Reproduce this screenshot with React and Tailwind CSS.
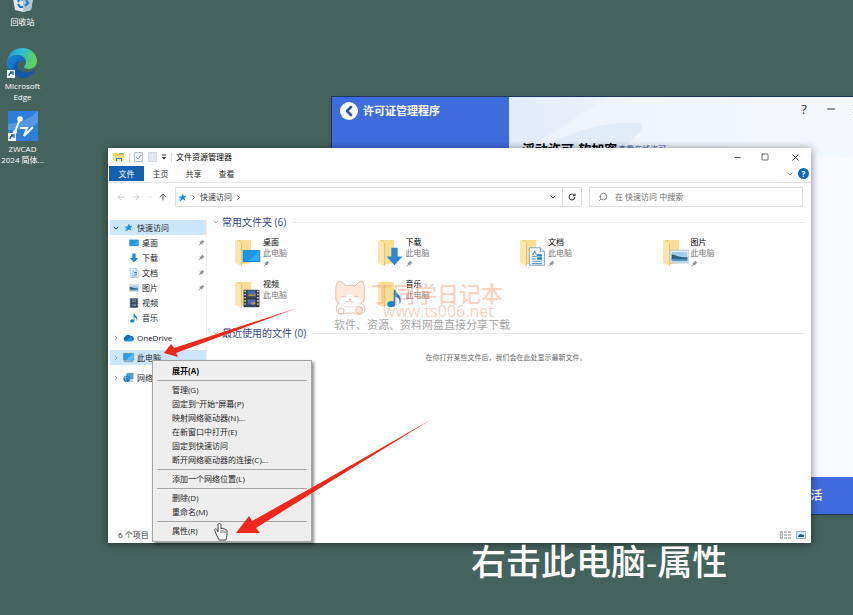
import { ArrowLeft, ArrowRight, ArrowUp, ChevronDown, ChevronLeft, ChevronRight, Minus, RotateCw, Search, Square, X } from "lucide-react"

function StarIcon({ className = "" }) {
  return (
    <svg viewBox="0 0 20 20" className={className} aria-hidden="true">
      <path d="M11 1l2 5.500 6-.500-4.500 5 2 6-5.500-3-6 4.500-1 0 2.500-6.500L1 8.500l6.500-1z" fill="#1e90e6" />
      <path d="M1 17l5-3M2 13h3" stroke="#5db4f0" strokeWidth="1.500" />
    </svg>
  )
}

function PinIcon({ className = "" }) {
  return (
    <svg viewBox="0 0 14 14" className={className} aria-hidden="true">
      <path d="M8 1l5 5-2 .5-2 2-.5 3L6 9.500 1.500 13 1 12.500 4.500 8 2.500 5.500l3-.5 2-2z" fill="#8d949a" />
    </svg>
  )
}

function ScreenShape() {
  return (
    <>
      <path d="M1 4h22v15H1z" fill="#0f79cf" />
      <path d="M2 5h20v13H2z" fill="#1b97ea" />
      <path d="M22 5v13H8z" fill="#35a9f3" />
    </>
  )
}

function ArrowShape() {
  return <path d="M8 1h8v11h6L12 23 2 12h6z" fill="#2f86d6" />
}

function DocShape() {
  return (
    <>
      <path d="M3 1h14l5 5v17H3z" fill="#f7fbfe" stroke="#7fa3bf" strokeWidth="1.200" />
      <path d="M17 1v5h5" fill="none" stroke="#7fa3bf" strokeWidth="1.200" />
      <path d="M7 10l3-5 1 4M6 12h6M6 15h5M6 18h13M6 21h13" fill="none" stroke="#5b9fd4" strokeWidth="1.300" />
      <path d="M12 9h7v3h-7zM13 13h6v3h-6z" fill="#2f7fc3" />
    </>
  )
}

function PhotoShape() {
  return (
    <>
      <path d="M0 4h24v16H0z" fill="#f4f8fb" stroke="#9db1c0" />
      <path d="M2 6h20v12H2z" fill="#9fcdf0" />
      <path d="M2 9c5 1 12 5 20 4v3H2z" fill="#2e5f7d" />
      <path d="M2 15h20v3H2z" fill="#4d94c0" />
    </>
  )
}

function FilmShape() {
  return (
    <>
      <path d="M2 1h20v22H2z" fill="#35383f" />
      <path d="M4 2v20M20 2v20" stroke="#c9ced6" strokeWidth="2" strokeDasharray="2 2" />
      <path d="M7 2h10v9H7zM7 13h10v9H7z" fill="#426fb5" />
      <path d="M8 8l3-2 3 2 3-3v5H8zM11 18l5-3 1 4-4 2z" fill="#bf8b45" />
      <path d="M7 9h10v2H7zM7 20h10v2H7z" fill="#2d4163" />
    </>
  )
}

function NoteShape() {
  return (
    <>
      <ellipse cx="8" cy="19" rx="5" ry="4" fill="#1685d8" />
      <path d="M11 1h2c0 5 8 6 7 14-.3 2-1 3-2 4 1-6-1-8-5-9v9h-2z" fill="#1685d8" />
    </>
  )
}

function PcShape() {
  return (
    <>
      <path d="M1 3h22v15H1z" fill="#2a9be6" stroke="#5b7f99" />
      <path d="M22 4v13H7z" fill="#62c0f7" />
      <path d="M2 21h20" stroke="#7f98aa" strokeWidth="2" />
    </>
  )
}

function CloudShape() {
  return (
    <>
      <path d="M5 20a5 5 0 0 1-.5-9.500A7 7 0 0 1 17 9a5.500 5.500 0 0 1 2 11z" fill="#0f6cbd" />
      <path d="M5 20l12-9a5.500 5.500 0 0 1 2 9z" fill="#2490df" />
    </>
  )
}

function NetworkShape() {
  return (
    <>
      <path d="M8 3l14-1v13l-14 2z" fill="#3a9fe3" stroke="#4f7f9f" />
      <circle cx="8" cy="15" r="7" fill="#2477bd" />
      <path d="M2 13c4-2 8-1 12 1M6 8c-2 5-1 9 2 14" fill="none" stroke="#8fd0f5" strokeWidth="1.500" />
      <path d="M14 20h8" stroke="#7f98aa" strokeWidth="2" />
    </>
  )
}

const shapes = {
  screen: ScreenShape,
  arrow: ArrowShape,
  doc: DocShape,
  photo: PhotoShape,
  film: FilmShape,
  note: NoteShape,
  pc: PcShape,
  cloud: CloudShape,
  network: NetworkShape,
}

function Icon({ name, className = "size-3" }) {
  const Shape = shapes[name]
  return (
    <svg viewBox="0 0 24 24" className={className} aria-hidden="true">
      <Shape />
    </svg>
  )
}

function FolderIcon({ name }) {
  const Shape = shapes[name]
  return (
    <svg viewBox="0 0 26 28" className="h-7 w-[26px] shrink-0" aria-hidden="true">
      <path d="M2 1h14v23l-8 1-6-1z" fill="#f4d27a" />
      <path d="M6 1h10v23H6z" fill="#f9df95" />
      <path d="M0 1l7 3v23l-7-3z" fill="#fbe7ad" />
      <path d="M6 4v23l1-1V4z" fill="#e8c46d" />
      <svg x="7" y="8" width="19" height="19" viewBox="0 0 24 24">
        <Shape />
      </svg>
    </svg>
  )
}

const folders = [
  { label: "桌面", icon: "screen", pinned: true },
  { label: "下载", icon: "arrow", pinned: true },
  { label: "文档", icon: "doc", pinned: true },
  { label: "图片", icon: "photo", pinned: true },
  { label: "视频", icon: "film" },
  { label: "音乐", icon: "note" },
]

const menuGroups = [
  ["展开(A)"],
  ["管理(G)", "固定到\"开始\"屏幕(P)", "映射网络驱动器(N)...", "在新窗口中打开(E)", "固定到快速访问", "断开网络驱动器的连接(C)..."],
  ["添加一个网络位置(L)"],
  ["删除(D)", "重命名(M)"],
  ["属性(R)"],
]

function ShortcutBadge() {
  return (
    <>
      <path d="M0 22h8v8H0z" fill="#f4f7fa" />
      <path d="M2 28c0-2 1-3 3-3M3 24h3v3" fill="none" stroke="#1b5fa8" strokeWidth="1.300" />
    </>
  )
}

function DesktopIcons() {
  return (
    <nav className="absolute -top-[17px] left-0 flex w-[45px] flex-col items-center text-center text-[8px] leading-[11px] text-white">
      <button type="button" className="flex flex-col items-center">
        <svg viewBox="0 0 30 30" className="size-[30px]" aria-hidden="true">
          <path d="M3 4h24l-4 23-8 2-8-2z" fill="#dfe5ea" />
          <path d="M15 4h12l-4 23-8 2z" fill="#b9c3cb" />
          <path d="M10 19l2-4 3 2M10 21l2 3h3M17 23l3-3-2-3" fill="none" stroke="#1f7ad1" strokeWidth="2.200" />
        </svg>
        <span className="mt-[3px]">回收站</span>
      </button>
      <button type="button" className="mt-[21px] flex flex-col items-center">
        <svg viewBox="0 0 30 30" className="size-[30px]" aria-hidden="true">
          <defs>
            <linearGradient id="edge-top" x1="0" y1="0" x2="1" y2="0.3">
              <stop offset="0" stopColor="#2494dc" />
              <stop offset="0.5" stopColor="#2fbcd5" />
              <stop offset="1" stopColor="#61d15b" />
            </linearGradient>
            <linearGradient id="edge-low" x1="0" y1="0" x2="1" y2="1">
              <stop offset="0" stopColor="#1b8ade" />
              <stop offset="1" stopColor="#114f9c" />
            </linearGradient>
          </defs>
          <path d="M0 15C1 5 7 0 15 0c9 0 15 6 15 13 0 5-4 8-8 8-3 0-5-1-5-2 0-1 2-2 2-5 0-4-4-7-8-7-6 0-11 4-11 8z" fill="url(#edge-top)" />
          <path d="M0 15c0-5 4-8 9-8 6 0 10 4 10 7-4-3-9 0-8 6 1 4 4 8 8 9-10 3-19-4-19-14z" fill="url(#edge-low)" />
          <path d="M12 13c-3 4-1 10 5 11 5 1 9-1 12-3-3 6-9 9-13 9-6-1-11-6-9-12 1-3 3-5 5-5z" fill="#1457a8" />
          <ShortcutBadge />
        </svg>
        <span className="mt-[2px]">Microsoft<br />Edge</span>
      </button>
      <button type="button" className="mt-[9px] flex flex-col items-center">
        <svg viewBox="0 0 30 30" className="size-[30px]" aria-hidden="true">
          <path d="M0 0h30v30H0z" fill="#2e7fdb" />
          <path d="M0 13C12 12 22 8 30 0v12C20 18 10 19 0 19z" fill="#5599e4" />
          <path d="M12 8L7 21" stroke="#fff" strokeWidth="2" />
          <circle cx="12" cy="8" r="2.800" fill="#fff" />
          <circle cx="7" cy="21" r="2" fill="#fff" />
          <path d="M12 17h7l-3 8 9-9" fill="none" stroke="#fff" strokeWidth="2" />
          <ShortcutBadge />
        </svg>
        <span className="mt-[2px] whitespace-nowrap">ZWCAD<br />2024 简体...</span>
      </button>
    </nav>
  )
}

function LicenseWindow() {
  return (
    <section className="absolute top-24 -right-5 bottom-[100px] left-[331px] flex border border-[#1f3561] bg-[#f6f9fe] shadow-sm">
      <div className="w-[177px] shrink-0 bg-[#3e6cdc]">
        <header className="flex items-center gap-[5px] px-2 pt-[5px] text-white">
          <button type="button" aria-label="返回" className="flex size-[18px] items-center justify-center rounded-full bg-white text-[#2f57b8]">
            <ChevronLeft className="-ml-px size-4" strokeWidth={4} />
          </button>
          <h2 className="text-[11px] font-bold">许可证管理程序</h2>
        </header>
      </div>
      <div className="relative flex min-w-0 flex-1 flex-col bg-linear-to-r from-[#e2ecfa] via-[#f0f5fd] to-[#fafbfe]">
        <svg viewBox="0 0 360 120" className="absolute top-0 left-0 h-[120px] w-[360px]" aria-hidden="true">
          <path d="M30 45C60 25 80 12 98 0h262v60H20z" fill="#f0f6fe" opacity="0.600" />
          <path d="M20 60c30-22 75-38 112-34 6 6-10 20-34 34z" fill="#d9e6f6" opacity="0.600" />
        </svg>
        <div className="relative flex h-6 items-center justify-end gap-[13px] pr-[10px] text-[#333]">
          <button type="button" aria-label="帮助" className="w-4 text-[13px] leading-4">?</button>
          <button type="button" aria-label="最小化"><Minus className="size-3" strokeWidth={2} /></button>
          <button type="button" aria-label="关闭"><X className="size-3" strokeWidth={2} /></button>
        </div>
        <div className="relative flex items-center gap-px px-[13px] pt-[18px] text-black">
          <h3 className="text-[13px] leading-5 font-bold">浮动许可-软加密</h3>
          <a href="#change" className="text-[8px] text-[#3f66a8]">查看在线许可</a>
        </div>
        <button type="button" className="mt-auto h-[37px] bg-[#3e6cdc] pl-60 text-[12px] font-medium text-white">激活</button>
      </div>
    </section>
  )
}

function TitleBar() {
  return (
    <header className="flex h-[18px] items-center pl-1 text-black">
      <svg viewBox="0 0 12 10" className="h-[10px] w-3" aria-hidden="true">
        <path d="M0 1h4l1 1h6v7H0z" fill="#f6cf62" />
        <path d="M0 4h11v5H0z" fill="#fbdf86" />
        <path d="M3 9V6h6v3H8V7H4v2z" fill="#3b82b8" />
        <path d="M6 1h5v1H6z" fill="#7cb56b" />
      </svg>
      <span className="mx-1 h-[9px] w-px bg-gray-300" />
      <svg viewBox="0 0 9 10" className="h-[10px] w-[9px]" aria-hidden="true">
        <path d="M.5.5h8v9h-8z" fill="#eef3f8" stroke="#b3c3d3" />
        <path d="M2 5l2 2 3-4" fill="none" stroke="#6d9ac4" />
      </svg>
      <svg viewBox="0 0 9 10" className="ml-[5px] h-[10px] w-[9px]" aria-hidden="true">
        <path d="M.5.5h8v9h-8z" fill="#dfe8f1" stroke="#d0dbe6" />
      </svg>
      <svg viewBox="0 0 6 6" className="ml-1 size-[6px]" aria-hidden="true">
        <path d="M1 1h4" stroke="#333" />
        <path d="M.5 3h5L3 5.500z" fill="#333" />
      </svg>
      <span className="mx-1 h-[9px] w-px bg-gray-300" />
      <h1 className="text-[8px]">文件资源管理器</h1>
      <div className="ml-auto flex items-center text-[#222]">
        <button type="button" aria-label="最小化" className="flex w-7 justify-center"><Minus className="size-[9px]" /></button>
        <button type="button" aria-label="最大化" className="flex w-7 justify-center"><Square className="size-2" /></button>
        <button type="button" aria-label="关闭" className="flex w-8 justify-center"><X className="size-[11px]" /></button>
      </div>
    </header>
  )
}

function Ribbon() {
  return (
    <div className="flex h-[17px] items-center border-b border-[#e4e4e4] pr-[2px] pb-px text-[8px] text-[#333]">
      <button type="button" className="h-[15px] w-[35px] bg-[#1560ae] text-white">文件</button>
      {["主页", "共享", "查看"].map((tab) => (
        <button key={tab} type="button" className="w-[33px]">{tab}</button>
      ))}
      <button type="button" aria-label="展开功能区" className="ml-auto text-[#aaa]"><ChevronDown className="size-2" strokeWidth={3} /></button>
      <button type="button" aria-label="帮助" className="ml-1 flex size-[11px] items-center justify-center rounded-full bg-[#1265b8] text-[8px] font-bold text-white">?</button>
    </div>
  )
}

function AddressBar() {
  return (
    <div className="flex items-center gap-[7px] pt-1 pr-2 pl-[7px] text-[8px] text-[#333]">
      <div className="flex w-[52px] items-center justify-between text-[#c4c4c4]">
        <button type="button" aria-label="后退"><ArrowLeft className="size-[10px]" /></button>
        <button type="button" aria-label="前进"><ArrowRight className="size-[10px]" /></button>
        <button type="button" aria-label="最近位置"><ChevronDown className="size-[6px]" /></button>
        <button type="button" aria-label="上一级" className="text-[#444]"><ArrowUp className="size-[10px]" /></button>
      </div>
      <div className="flex h-5 flex-1 items-center border border-[#e0e0e0] pl-[2px]">
        <StarIcon className="size-[9px]" />
        <ChevronRight className="mx-[3px] size-[7px]" strokeWidth={3} />
        <span>快速访问</span>
        <ChevronRight className="ml-[3px] size-[7px]" strokeWidth={3} />
        <button type="button" aria-label="以前的位置" className="ml-auto flex w-[18px] justify-center"><ChevronDown className="size-2" strokeWidth={3} /></button>
        <button type="button" aria-label="刷新" className="flex h-full w-[19px] items-center justify-center border-l border-[#e0e0e0]"><RotateCw className="size-2" strokeWidth={3} /></button>
      </div>
      <label className="flex h-5 w-[214px] items-center gap-[7px] border border-[#e0e0e0] px-2 text-[#777]">
        <Search className="size-[10px] -scale-x-100" />
        <input type="search" aria-label="搜索" placeholder="在 快速访问 中搜索" className="min-w-0 flex-1 outline-none placeholder:text-[#6d6d6d]" />
      </label>
    </div>
  )
}

function TreeRow({ label, icon, active }) {
  return (
    <button type="button" className={`flex h-[15px] w-full items-center gap-[3px] pl-[2px] ${active ? "bg-[#cce6fb]" : ""}`}>
      <ChevronRight className="size-2 text-[#888]" />
      <Icon name={icon} className="size-[11px]" />
      <span className="whitespace-nowrap">{label}</span>
    </button>
  )
}

function Sidebar() {
  return (
    <aside className="flex w-[98px] shrink-0 flex-col gap-[5px] border-r border-[#f2f2f2] pt-[5px] pl-px text-[8px] text-[#222]">
      <div>
        <button type="button" className="flex h-[15px] w-full items-center gap-[3px] bg-[#cce6fb] pl-[2px]">
          <ChevronDown className="size-2 text-[#333]" strokeWidth={3} />
          <StarIcon className="mx-px size-[9px]" />
          <span>快速访问</span>
        </button>
        {folders.map((folder) => (
          <button key={folder.label} type="button" className="flex h-[15px] w-full items-center gap-[3px] pr-px pl-[19px]">
            <Icon name={folder.icon} className="size-[10px]" />
            <span>{folder.label}</span>
            {folder.pinned ? <PinIcon className="ml-auto size-[7px]" /> : null}
          </button>
        ))}
      </div>
      <TreeRow label="OneDrive" icon="cloud" />
      <TreeRow label="此电脑" icon="pc" active />
      <TreeRow label="网络" icon="network" />
    </aside>
  )
}

function SectionTitle({ children }) {
  return (
    <div className="flex h-[14px] items-center gap-[2px] pl-[5px]">
      <ChevronDown className="size-2 text-[#888]" />
      <h2 className="text-[10px] leading-[14px] whitespace-nowrap text-[#30487f]">{children}</h2>
      <span className="ml-1 h-px flex-1 bg-[#ececec]" />
    </div>
  )
}

function FolderTile({ label, icon, pinned }) {
  return (
    <button type="button" className="flex h-[42px] items-start gap-[2px] text-left text-[8px] leading-[11px]">
      <span className="pt-[3px]"><FolderIcon name={icon} /></span>
      <span className="flex flex-col">
        <span className="text-black">{label}</span>
        <span className="text-[#777]">此电脑</span>
        {pinned ? <PinIcon className="mt-[2px] size-[7px]" /> : null}
      </span>
    </button>
  )
}

function ExplorerWindow() {
  return (
    <section className="absolute top-[148px] right-[42px] bottom-[72px] left-[108px] flex flex-col bg-white pl-px shadow-[0_1px_8px_rgba(0,0,0,0.5)]">
      <TitleBar />
      <Ribbon />
      <AddressBar />
      <div className="flex min-h-0 flex-1 pt-2">
        <Sidebar />
        <main className="min-w-0 flex-1 pr-[6px]">
          <SectionTitle>常用文件夹 (6)</SectionTitle>
          <div className="grid grid-cols-4 pt-[7px] pb-[6px] pl-7">
            {folders.map((folder) => (
              <FolderTile key={folder.label} {...folder} />
            ))}
          </div>
          <SectionTitle>最近使用的文件 (0)</SectionTitle>
          <p className="pt-3 text-center text-[7px] leading-[11px] text-[#666]">在你打开某些文件后，我们会在此处显示最新文件。</p>
        </main>
      </div>
      <footer className="flex h-4 items-center gap-[5px] pr-[5px] pl-[9px] text-[8px] text-[#333]">
        <span className="mr-auto">6 个项目</span>
        <svg viewBox="0 0 11 8" className="h-2 w-[11px]" aria-hidden="true">
          <path d="M.5.5h2v7h-2z" fill="#ddd" stroke="#aaa" />
          <path d="M4 1h3M8 1h3M4 4h3M8 4h3M4 7h3M8 7h3" stroke="#888" />
        </svg>
        <svg viewBox="0 0 10 8" className="h-2 w-[10px]" aria-hidden="true">
          <path d="M.5.5h9v7h-9z" fill="#d5ecf8" stroke="#86b5cc" />
          <path d="M2 5l2-2 4 1v2H2z" fill="#2c5c74" />
        </svg>
      </footer>
    </section>
  )
}

function Watermark() {
  return (
    <div className="absolute top-[279px] left-[334px] text-[#f59a70]/45">
      <div className="flex items-start gap-[5px]">
        <svg viewBox="0 0 32 36" className="mt-px h-9 w-8" fill="none" stroke="#dcae9a" strokeWidth="0.800" aria-hidden="true">
          <path d="M2 15C1 8 3 1 5 1c3 0 5 3 7 5 3-1 6-1 9 0 2-2 4-5 7-5 2 1 3 8 2 14 2 6-3 12-14 12S0 21 2 15z" fill="#fbe3d2" fillOpacity="0.800" />
          <path d="M5 20c3-3 7-3 11-6 4 3 8 3 11 6-2 4-6 6-11 6s-9-2-11-6z" fill="#fff" stroke="none" />
          <path d="M4 24c-3 4-2 9 3 10 3 0 4-1 5-1h8c2 2 8 2 10-1 2-3 1-6-2-8" fill="#fff" fillOpacity="0.600" />
          <path d="M8 17c1-1 3-1 4 0M20 17c1-1 3-1 4 0M15 19h2l-1 1zM12 21c2 2 3 1 4 0 1 1 2 2 4 0" />
          <circle cx="25" cy="30" r="3.500" fill="#f8d5cf" fillOpacity="0.700" />
          <circle cx="7" cy="31" r="3" />
        </svg>
        <div className="flex flex-col">
          <strong className="text-[22px] leading-7 font-medium">丁同学日记本</strong>
          <span className="-mt-1 pl-3 text-[16px] leading-4">www.ts006.net</span>
        </div>
      </div>
      <p className="-mt-px text-[11px] leading-[13px] text-[#8b8b8b]/80">软件、资源、资料网盘直接分享下载</p>
    </div>
  )
}

function ContextMenu() {
  return (
    <div className="absolute top-[360px] left-[152px] w-[160px] border border-[#a3a3a3] bg-[#eeeeee] px-1 py-[3px] text-[8px] text-[#222] shadow-[2px_2px_3px_rgba(0,0,0,0.45)]">
      {menuGroups.map((group, index) => (
        <div key={group[0]}>
          {index > 0 ? <hr className="my-[2px] border-[#a6a6a6]" /> : null}
          {group.map((item) => (
            <button
              key={item}
              type="button"
              className={`flex h-[14px] w-full items-center pl-[15px] ${index === 0 ? "font-bold text-black" : ""}`}
            >
              {item}
            </button>
          ))}
        </div>
      ))}
    </div>
  )
}

function Annotations() {
  return (
    <svg className="pointer-events-none absolute inset-0 size-full" aria-hidden="true">
      <path d="M215 531c-1-2 1-3 2-1l1 2v-7c0-2 3-2 3 0v4c1-1 2-1 2 0 1-1 2 0 2 1 1-1 2 0 2 1v4c0 2-1 3-1 5h-7c-1-3-3-5-4-9z" fill="#fff" stroke="#333" strokeWidth="0.900" />
      <path d="M221 530v3M223 530v3M225 531v2" stroke="#333" strokeWidth="0.700" />
      <path d="M164 353l7-9 3 4 123-40-121 45 2 4z" fill="#f0281c" />
      <path d="M236 533l13-17 3 5 68-38 112-64-112 69-64 40 4 5z" fill="#f0281c" />
    </svg>
  )
}

export default function App() {
  return (
    <div
      lang="zh-CN"
      className="relative min-h-screen overflow-hidden bg-[#45635d] font-['Open_Sans','Noto_Sans_CJK_SC',sans-serif]"
    >
      <DesktopIcons />
      <LicenseWindow />
      <ExplorerWindow />
      <Watermark />
      <ContextMenu />
      <Annotations />
      <p className="absolute bottom-[27px] left-[471px] text-[35px] leading-[52px] font-medium whitespace-nowrap text-white">右击此电脑-属性</p>
    </div>
  )
}
